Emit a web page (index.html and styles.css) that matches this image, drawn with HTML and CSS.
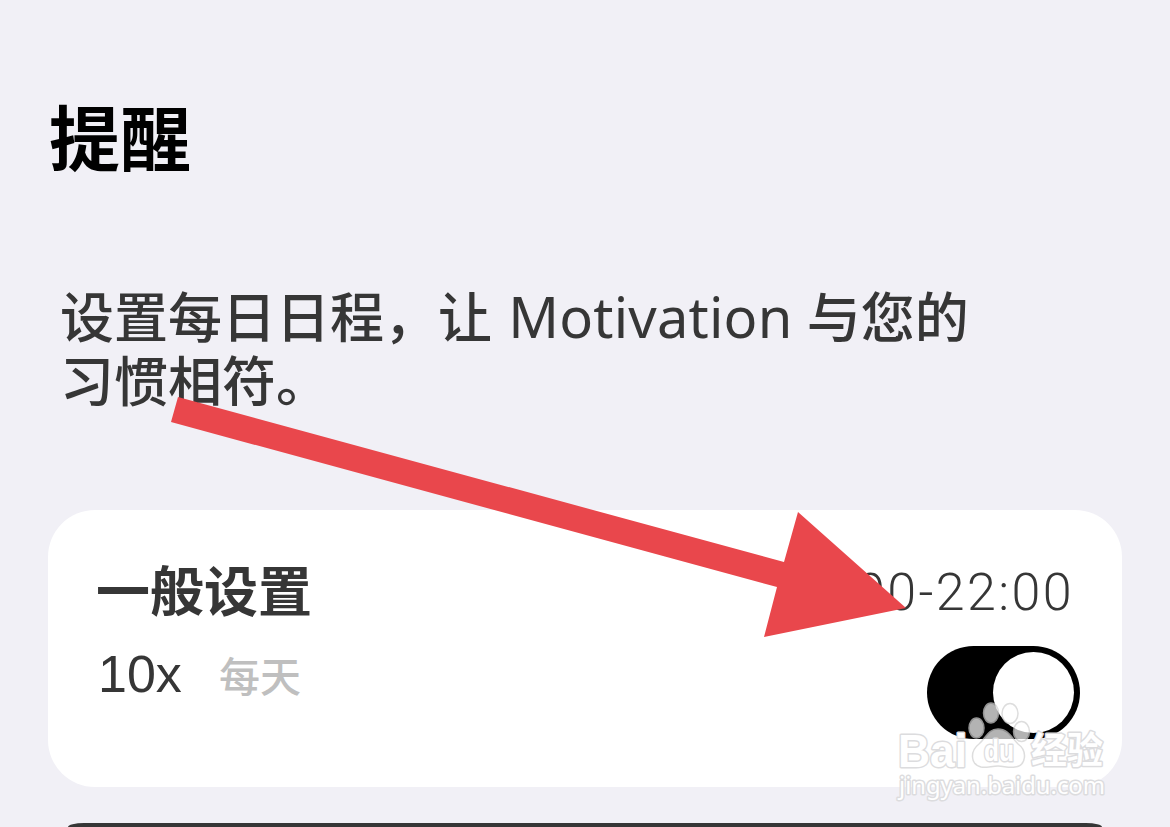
FILE: index.html
```
<!DOCTYPE html>
<html lang="zh-CN">
  <head>
    <meta charset="utf-8">
    <title>提醒</title>
    <link rel="stylesheet" href="styles.css">
  </head>
  <body>
    <main class="page">
      <h1 class="title">提醒</h1>
      <p class="intro">设置每日日程，让 <span class="latin">Motivation</span> 与您的<br>习惯相符。</p>
      <section class="card">
        <div class="info">
          <h2 class="name">一般设置</h2>
          <div class="repeat">
            <span class="count">10x</span>
            <span class="days">每天</span>
          </div>
        </div>
        <div class="schedule">
          <span class="time">9:00-22:00</span>
          <span class="toggle"><span class="knob"></span></span>
        </div>
      </section>
      <section class="card-dark"></section>
    </main>

    <svg class="arrow" width="1170" height="827" viewBox="0 0 1170 827">
      <path d="M178 397L784 562L798 512L906 608L764 637L777 587L171 422Z" fill="#e9474c"/>
    </svg>

    <svg class="watermark" width="230" height="110" viewBox="890 700 230 110">
      <g class="paw">
        <ellipse cx="976.500" cy="728" rx="7.500" ry="10"/>
        <ellipse cx="991" cy="713" rx="7.500" ry="10"/>
        <ellipse cx="1010" cy="713.500" rx="8" ry="10"/>
        <ellipse cx="1021.500" cy="731.500" rx="8" ry="10"/>
        <path d="M998 729C1008 729 1012 738 1018 744C1028 751 1026 766 1015 767C1008 768 1004 766 998 766C992 766 986 768 981 767C970 764 970 751 979 744C986 738 988 729 998 729Z"/>
      </g>
      <g class="mark">
        <text class="bai" x="898" y="767" textLength="69" lengthAdjust="spacingAndGlyphs">Bai</text>
        <text class="du" x="984" y="761" textLength="30" lengthAdjust="spacingAndGlyphs">du</text>
        <text class="cn" x="1031" y="764" textLength="72" lengthAdjust="spacingAndGlyphs">经验</text>
        <text class="url" x="899" y="794" textLength="206" lengthAdjust="spacingAndGlyphs">jingyan.baidu.com</text>
      </g>
    </svg>
  </body>
</html>
```

FILE: styles.css
```
* {
  box-sizing: border-box;
}
body {
  margin: 0;
  background-color: #f1f0f6;
  color: #363636;
  font-family: "Noto Sans CJK SC", sans-serif;
}
.page {
  display: flex;
  flex-direction: column;
  height: 827px;
  padding: 84px 48px 0;
}
.title {
  margin: 0 0 0 1px;
  color: #000;
  font-size: 71px;
  font-weight: 700;
  line-height: 100px;
}
.intro {
  margin: 99px 0 0 12px;
  font-size: 54px;
  font-weight: 500;
  line-height: 64px;
  white-space: nowrap;
}
.latin {
  margin: 0 2px 0 4px;
  font-family: "Noto Sans", sans-serif;
  font-size: 56px;
  font-weight: 400;
  line-height: 1;
  letter-spacing: 0.2px;
}
.card {
  display: flex;
  justify-content: space-between;
  height: 277px;
  margin-top: 99px;
  padding: 40px 42px 0 48px;
  border-radius: 47px;
  background-color: #fff;
}
.name {
  margin: 0;
  font-size: 54px;
  font-weight: 700;
  line-height: 78px;
}
.repeat {
  display: flex;
  align-items: center;
  height: 92px;
}
.count {
  width: 121px;
  margin-left: 2px;
  font-family: "Liberation Sans", sans-serif;
  font-size: 52px;
}
.days {
  color: #bfbfbf;
  font-size: 41px;
  font-weight: 500;
}
.schedule {
  display: flex;
  flex-direction: column;
  align-items: flex-end;
}
.time {
  margin-right: 6px;
  font-family: Roboto, sans-serif;
  font-size: 52px;
  font-weight: 300;
  line-height: 85px;
  letter-spacing: 2.4px;
}
.toggle {
  display: flex;
  justify-content: flex-end;
  width: 153px;
  height: 93px;
  margin-top: 11px;
  padding: 6px;
  border-radius: 47px;
  background-color: #000;
}
.knob {
  width: 81px;
  height: 81px;
  border-radius: 50%;
  background-color: #fff;
}
.card-dark {
  flex: 1;
  margin: 36px 20px 0;
  border-radius: 20px 20px 0 0 / 5px 5px 0 0;
  background-color: #363636;
}
.arrow {
  position: absolute;
  top: 0;
  left: 0;
}
.watermark {
  position: absolute;
  top: 700px;
  left: 890px;
}
.paw {
  fill: #fff;
  stroke: #d0d0d0;
  stroke-width: 1.5px;
  opacity: 0.7;
}
.mark {
  fill: #fff;
  stroke: #dcdcde;
  stroke-width: 3px;
  stroke-linejoin: round;
  paint-order: stroke;
}
.bai {
  font: bold 47px "Liberation Sans", sans-serif;
}
.du {
  font: bold 30px "Liberation Sans", sans-serif;
}
.cn {
  font: bold 37px "Noto Sans CJK SC", sans-serif;
}
.url {
  font: 24px "Noto Sans", sans-serif;
}
```
